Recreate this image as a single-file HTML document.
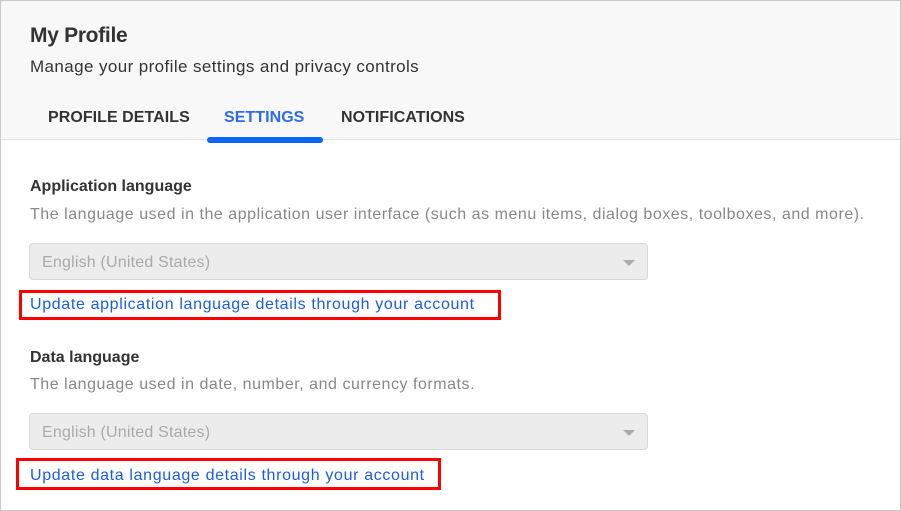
<!DOCTYPE html><html><head><style>
*{margin:0;padding:0;box-sizing:border-box}
body{width:901px;height:511px;overflow:hidden;background:#fff;font-family:"Liberation Sans",Arial,sans-serif;position:relative}
.frame{position:absolute;left:0;top:0;width:901px;height:511px;border:1px solid #c8c8c8}
.hdr{position:absolute;left:1px;top:1px;width:899px;height:139px;background:#f8f8f8;border-bottom:1px solid #e0e0e0}
.a{position:absolute;white-space:nowrap}
.tab{font-size:16px;font-weight:bold;letter-spacing:0.05px;color:#333;top:109px}
.sel{position:absolute;left:29px;width:619px;height:37px;background:#ececec;border:1px solid #d8d8d8;border-radius:4px;color:#aaa;font-size:16px;padding:10px 12px;letter-spacing:0.2px}
.sel:after{content:"";position:absolute;right:12px;top:16px;border-left:6px solid transparent;border-right:6px solid transparent;border-top:6px solid #aaa}
.lbl{font-size:16px;font-weight:bold;color:#333}
.desc{font-size:16px;color:#888;letter-spacing:0.53px}
.link{font-size:16px;color:#1a5ce8;letter-spacing:0.65px}
.red{position:absolute;border:3px solid #f00}
</style></head><body>
<div class="hdr"></div>
<div class="frame"></div>
<div class="a" style="left:30px;top:24px;font-size:21px;color:#333;font-weight:bold;letter-spacing:-0.3px">My Profile</div>
<div class="a" style="left:30px;top:57px;font-size:17px;color:#333;letter-spacing:0.4px">Manage your profile settings and privacy controls</div>
<div class="a tab" style="left:48px">PROFILE DETAILS</div>
<div class="a tab" style="left:224px;color:#2d6cf0">SETTINGS</div>
<div class="a tab" style="left:341px">NOTIFICATIONS</div>
<div class="a" style="left:207px;top:137px;width:116px;height:6px;background:#0a66f0;border-radius:3px"></div>
<div class="a lbl" style="left:30px;top:178px">Application language</div>
<div class="a desc" style="left:30px;top:206px">The language used in the application user interface (such as menu items, dialog boxes, toolboxes, and more).</div>
<div class="sel" style="top:243px">English (United States)</div>
<div class="red" style="left:19px;top:290px;width:482px;height:30px"></div>
<div class="a link" style="left:30px;top:296px">Update application language details through your account</div>
<div class="a lbl" style="left:30px;top:349px">Data language</div>
<div class="a desc" style="left:30px;top:376px">The language used in date, number, and currency formats.</div>
<div class="sel" style="top:413px">English (United States)</div>
<div class="red" style="left:16px;top:458px;width:425px;height:32px"></div>
<div class="a link" style="left:30px;top:467px">Update data language details through your account</div>
</body></html>
